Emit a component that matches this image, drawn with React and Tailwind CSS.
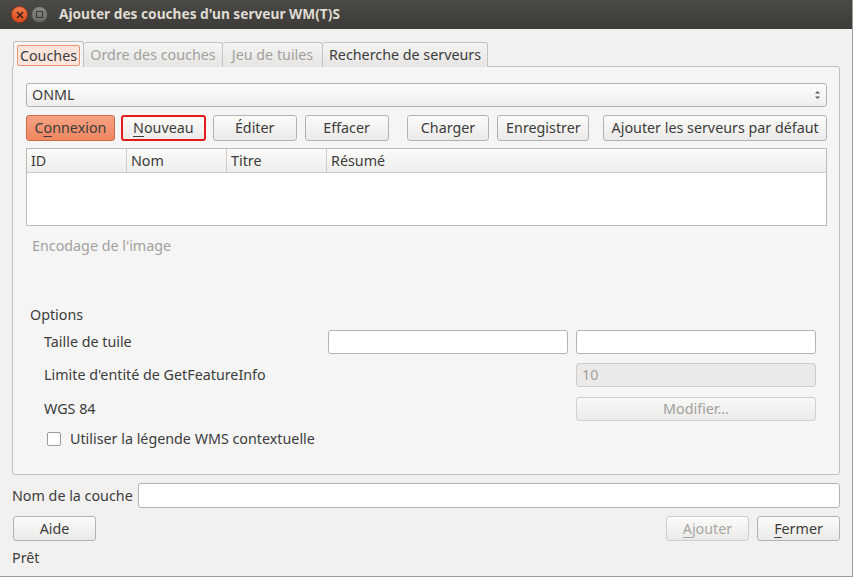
import React from 'react'

const font = { fontFamily: '"Noto Sans", "DejaVu Sans", sans-serif' }

function Btn({ children, className = '', disabled, w }) {
  return (
    <div
      className={`h-[26px] flex items-center justify-center rounded-[3px] border border-[#b5b3ae] bg-gradient-to-b from-[#fbfbfa] to-[#ebeae8] text-[14.3px] ${disabled ? 'text-[#a9a7a3] border-[#cfcdc9]' : 'text-[#3c3c3c]'} ${w} ${className}`}
    >
      {children}
    </div>
  )
}

function U({ children }) {
  return <span className="underline underline-offset-[3px] decoration-1">{children}</span>
}

export default function App() {
  return (
    <div style={font} className="w-[853px] h-[577px] bg-[#f2f1f0] border-r border-b border-[#9c9a96] flex flex-col text-[#3c3c3c] overflow-hidden">
      {/* title bar */}
      <div className="h-[29px] shrink-0 bg-gradient-to-b from-[#4b4a46] to-[#3c3b37] flex items-center pl-[11px]">
        <div className="w-[17px] h-[17px] rounded-full bg-gradient-to-b from-[#f57a4a] to-[#d9481a] flex items-center justify-center border border-[#9e3a18]">
          <svg width="8" height="8" viewBox="0 0 8 8"><path d="M1 1L7 7M7 1L1 7" stroke="#3b2217" strokeWidth="1.6" /></svg>
        </div>
        <div className="ml-[3px] w-[17px] h-[17px] rounded-full bg-gradient-to-b from-[#8a8984] to-[#6a6964] flex items-center justify-center border border-[#4a4945]">
          <div className="w-[7px] h-[7px] border border-[#3a3936]" />
        </div>
        <div className="ml-[11px] text-[13.7px] font-bold text-[#dfdbd2]">Ajouter des couches d'un serveur WM(T)S</div>
      </div>

      <div className="flex-1 flex flex-col px-[12px] pt-[12px]">
        {/* tabs */}
        <div className="flex h-[26px] items-end relative z-10 pl-[1px]">
          <div className="h-[26px] w-[71px] border border-b-0 border-[#c2c0bb] rounded-t-[3px] bg-[#f5f5f5] flex items-center justify-center px-[3px] pt-[2px]">
            <div className="w-full h-[21px] border border-[#f0926d] rounded-[2px] bg-[#fbe5dc] flex items-center justify-center text-[14.3px] text-[#3c3c3c]">Couches</div>
          </div>
          <div className="h-[25px] w-[139px] border border-l-0 border-b-0 border-[#c6c4bf] rounded-t-[3px] bg-gradient-to-b from-[#f4f4f3] to-[#e6e5e3] flex items-center justify-center text-[14.3px] text-[#a3a19d]">Ordre des couches</div>
          <div className="h-[25px] w-[100px] border border-l-0 border-b-0 border-[#c6c4bf] rounded-t-[3px] bg-gradient-to-b from-[#f4f4f3] to-[#e6e5e3] flex items-center justify-center text-[14.3px] text-[#a3a19d]">Jeu de tuiles</div>
          <div className="h-[25px] w-[165px] border border-l-0 border-b-0 border-[#c6c4bf] rounded-t-[3px] bg-gradient-to-b from-[#f4f4f3] to-[#e6e5e3] flex items-center justify-center text-[14.3px] text-[#3c3c3c]">Recherche de serveurs</div>
        </div>

        {/* pane */}
        <div className="h-[409px] -mt-[1px] border border-[#c2c0bb] rounded-b-[3px] rounded-tr-[3px] bg-[#f5f5f5] flex flex-col pl-[13px] pr-[12px] pt-[16px]">
          <div className="h-[24px] rounded-[3px] border border-[#b5b3ae] bg-gradient-to-b from-[#fdfdfc] to-[#efeeec] flex items-center justify-between pl-[5px] pr-[5px] text-[14.3px]">
            <span>ONML</span>
            <svg width="7" height="12" viewBox="0 0 7 12"><path d="M1 4.5L3.5 2L6 4.5Z" fill="#5a5a5a" /><path d="M1 7.5L3.5 10L6 7.5Z" fill="#5a5a5a" /></svg>
          </div>

          <div className="flex mt-[8px] h-[26px]">
            <div className="w-[89px] h-[26px] rounded-[3px] border border-[#c96c47] bg-gradient-to-b from-[#f6a283] to-[#ee8660] flex items-center justify-center text-[14.3px] text-[#3c3c3c]">
              <span>C<U>o</U>nnexion</span>
            </div>
            <Btn w="w-[85px]" className="ml-[6px] border-2 !border-[#e01c1c]"><span><U>N</U>ouveau</span></Btn>
            <Btn w="w-[84px]" className="ml-[7px]">Éditer</Btn>
            <Btn w="w-[84px]" className="ml-[8px]">Effacer</Btn>
            <Btn w="w-[83px]" className="ml-[18px]">Charger</Btn>
            <Btn w="w-[92px]" className="ml-[8px]">Enregistrer</Btn>
            <Btn w="w-[224px]" className="ml-[14px]">Ajouter les serveurs par défaut</Btn>
          </div>

          <div className="mt-[7px] h-[78px] border border-[#bdbbb7] bg-white flex flex-col">
            <div className="h-[24px] flex border-b border-[#cfcdc9] bg-gradient-to-b from-[#fbfbfa] to-[#efeeec] text-[14.3px]">
              <div className="w-[100px] border-r border-[#cfcdc9] pl-[4px] flex items-center">ID</div>
              <div className="w-[100px] border-r border-[#cfcdc9] pl-[4px] flex items-center">Nom</div>
              <div className="w-[100px] border-r border-[#cfcdc9] pl-[4px] flex items-center">Titre</div>
              <div className="flex-1 pl-[4px] flex items-center">Résumé</div>
            </div>
          </div>

          <div className="mt-[9px] pl-[6px] text-[14.3px] text-[#a3a19d]">Encodage de l'image</div>

          <div className="mt-[48px] pl-[4px] text-[14.3px]">Options</div>

          <div className="mt-[4px] flex items-center h-[24px] pl-[18px] pr-[11px] text-[14.3px]">
            <div className="flex-1">Taille de tuile</div>
            <div className="w-[240px] h-[24px] rounded-[3px] border border-[#b5b3ae] bg-white" />
            <div className="ml-[8px] w-[240px] h-[24px] rounded-[3px] border border-[#b5b3ae] bg-white" />
          </div>
          <div className="mt-[9px] flex items-center h-[24px] pl-[18px] pr-[11px] text-[14.3px]">
            <div className="flex-1">Limite d'entité de GetFeatureInfo</div>
            <div className="w-[240px] h-[24px] rounded-[3px] border border-[#cfcdc9] bg-[#ebeae8] flex items-center pl-[5px] text-[#a3a19d]">10</div>
          </div>
          <div className="mt-[10px] flex items-center h-[24px] pl-[18px] pr-[11px] text-[14.3px]">
            <div className="flex-1">WGS 84</div>
            <div className="w-[240px] h-[24px] rounded-[3px] border border-[#d3d1cd] bg-gradient-to-b from-[#f8f8f7] to-[#ecebe9] flex items-center justify-center text-[#a3a19d]">Modifier...</div>
          </div>
          <div className="mt-[6px] flex items-center h-[24px] pl-[21px] text-[14.3px]">
            <div className="w-[14px] h-[14px] rounded-[2px] border border-[#9c9a96] bg-white" />
            <div className="ml-[9px]">Utiliser la légende WMS contextuelle</div>
          </div>
        </div>

        {/* layer name */}
        <div className="mt-[8px] flex items-center h-[25px] text-[14.3px]">
          <div className="w-[126px]">Nom de la couche</div>
          <div className="flex-1 h-[25px] rounded-[3px] border border-[#b5b3ae] bg-white" />
        </div>

        <div className="mt-[8px] flex h-[25px] pl-[1px]">
          <Btn w="w-[83px]" className="!h-[25px]">Aide</Btn>
          <div className="flex-1" />
          <Btn w="w-[83px]" className="!h-[25px]" disabled><span><U>A</U>jouter</span></Btn>
          <Btn w="w-[83px]" className="!h-[25px] ml-[8px]"><span><U>F</U>ermer</span></Btn>
        </div>

        <div className="mt-[6px] text-[14.3px]">Prêt</div>
      </div>
    </div>
  )
}
